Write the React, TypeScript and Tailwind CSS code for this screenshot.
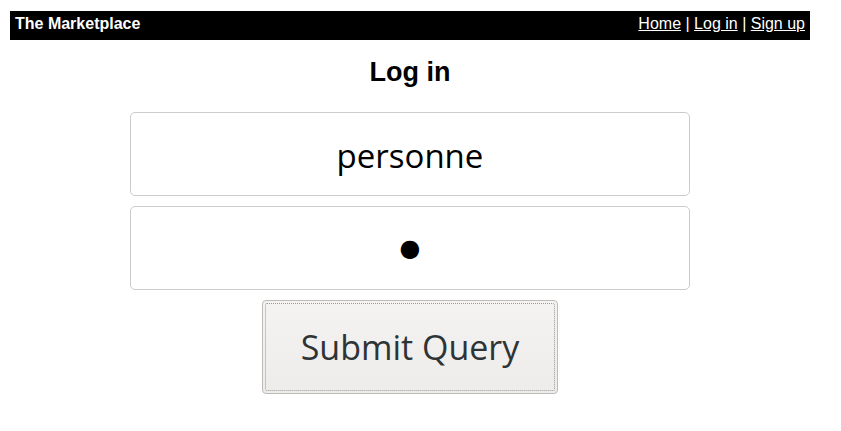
export default function App() {
  const sans = { fontFamily: '"Liberation Sans", Arial, sans-serif' };
  return (
    <div className="bg-white min-h-[431px] pt-[11px] pl-[10px]" style={sans}>
      <div className="w-[800px] flex flex-col items-center">
        <div className="w-full h-[29px] bg-black text-white text-[16px] flex items-center justify-between px-[5px] pb-[3px]">
          <span className="font-bold">The Marketplace</span>
          <span>
            <a href="#" className="underline">Home</a> | <a href="#" className="underline">Log in</a> | <a href="#" className="underline">Sign up</a>
          </span>
        </div>
        <h1 className="text-[27px] font-bold text-black mt-[16px] leading-[32px]">Log in</h1>
        <div className="mt-[24px] flex flex-col items-center gap-[10px]" style={{ fontFamily: '"Open Sans", "Noto Sans", sans-serif' }}>
          <div className="w-[560px] h-[84px] border border-[#cdccca] rounded-[5px] flex items-center justify-center pt-[4px] text-[33px] text-black">
            personne
          </div>
          <div className="w-[560px] h-[84px] border border-[#cdccca] rounded-[5px] flex items-center justify-center text-[33px] text-black">
            <span className="text-[24px]" style={{ fontFamily: '"DejaVu Sans", sans-serif' }}>●</span>
          </div>
          <div className="w-[296px] h-[94px] border border-[#bcbbb8] rounded-[4px] p-[2px] bg-gradient-to-b from-[#f4f3f2] to-[#edecea]">
            <div className="w-full h-full border border-dotted border-[#9a9996] rounded-[2px] flex items-center justify-center text-[34px] text-[#2e3436]">
              Submit Query
            </div>
          </div>
        </div>
      </div>
    </div>
  );
}
